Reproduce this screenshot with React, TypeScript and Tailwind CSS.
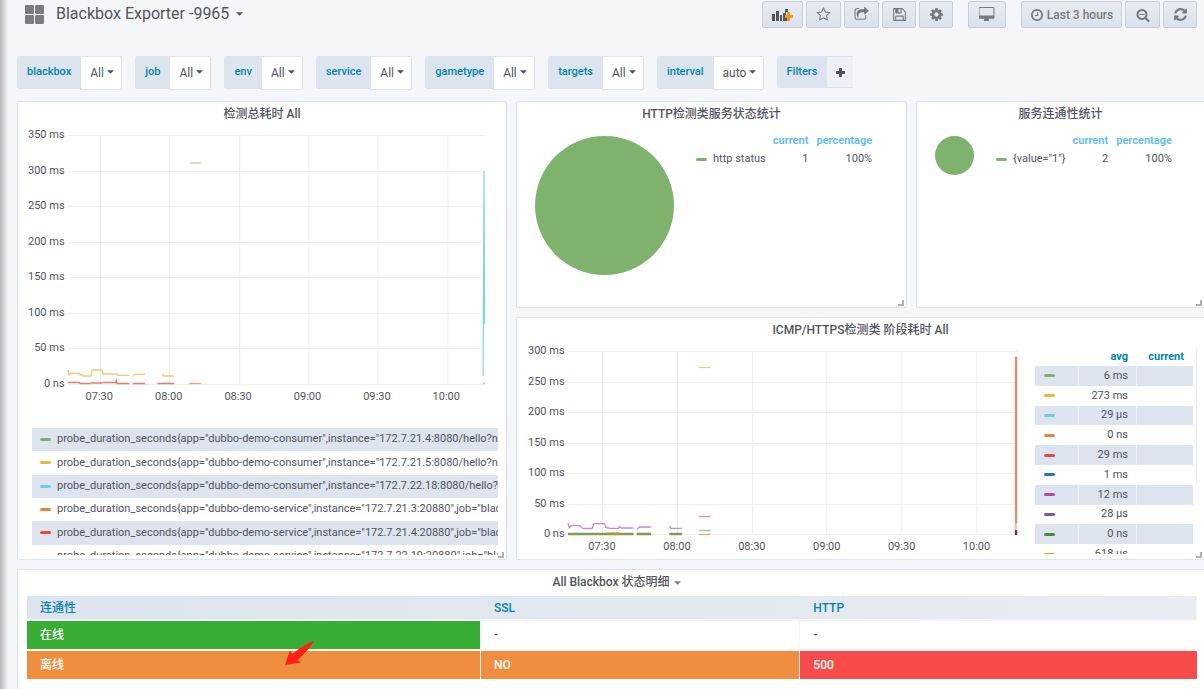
import type { ReactNode } from "react";

const GREEN = "#7eb26d";
const YELLOW = "#eab839";
const CYAN = "#6ed0e0";
const ORANGE = "#ef843c";
const RED = "#e24d42";
const BLUE = "#1f78c1";
const MAGENTA = "#ba43a9";

const icons = {
  star: "M1201 1004l306-297-422-62-189-382-189 382-422 62 306 297-73 421 378-199 377 199zm527-357q0 22-26 48l-363 354 86 500q1 7 1 20 0 50-41 50-19 0-40-12l-449-236-449 236q-22 12-40 12-21 0-31.5-14.5t-10.5-35.5q0-6 2-20l86-500-364-354q-25-27-25-48 0-37 56-46l502-73 225-455q19-41 49-41t49 41l225 455 502 73q56 9 56 46z",
  share:
    "M1472 989v259q0 119-84.5 203.5t-203.5 84.5h-832q-119 0-203.5-84.5t-84.5-203.5v-832q0-119 84.5-203.5t203.5-84.5h255q13 0 22.5 9.5t9.5 22.5q0 27-26 32-77 26-133 60-10 4-16 4h-112q-66 0-113 47t-47 113v832q0 66 47 113t113 47h832q66 0 113-47t47-113v-214q0-19 18-28 28-13 54-37 16-16 35-8 21 9 21 29zm237-496l-384 384q-18 19-45 19-12 0-25-5-39-17-39-59v-192h-160q-323 0-438 131-119 137-74 473 3 23-20 34-8 2-12 2-16 0-26-13-10-14-21-31t-39.5-68.5-49.5-99.5-38.5-114-17.5-122q0-49 3.5-91t14-90 28-88 47-81.5 68.5-74 94.5-61.5 124.5-48.5 159.5-30.5 196.5-11h160v-192q0-42 39-59 13-5 25-5 26 0 45 19l384 384q19 19 19 45t-19 45z",
  save: "M512 1536h768v-384h-768v384zm896 0h128v-896q0-14-10-38.5t-20-34.5l-281-281q-10-10-34-20t-39-10v416q0 40-28 68t-68 28h-576q-40 0-68-28t-28-68v-416h-128v1280h128v-416q0-40 28-68t68-28h832q40 0 68 28t28 68v416zm-384-928v-320q0-13-9.5-22.5t-22.5-9.5h-192q-13 0-22.5 9.5t-9.5 22.5v320q0 13 9.5 22.5t22.5 9.5h192q13 0 22.5-9.5t9.5-22.5zm640 32v928q0 40-28 68t-68 28h-1344q-40 0-68-28t-28-68v-1344q0-40 28-68t68-28h928q40 0 88 20t76 48l280 280q28 28 48 76t20 88z",
  cog: "M1152 896q0-106-75-181t-181-75-181 75-75 181 75 181 181 75 181-75 75-181zm512-109v222q0 12-8 23t-20 13l-185 28q-19 54-39 91 35 50 107 138 10 12 10 25t-9 23q-27 37-99 108t-94 71q-12 0-26-9l-138-108q-44 23-91 38-16 136-29 186-7 28-36 28h-222q-14 0-24.5-8.5t-11.5-21.5l-28-184q-49-16-90-37l-141 107q-10 9-25 9-14 0-25-11-126-114-165-168-7-10-7-23 0-12 8-23 15-21 51-66.5t54-70.5q-27-50-41-99l-183-27q-13-2-21-12.5t-8-23.5v-222q0-12 8-23t19-13l186-28q14-46 39-92-40-57-107-138-10-12-10-24 0-10 9-23 26-36 98.5-107.5t94.5-71.5q13 0 26 10l138 107q44-23 91-38 16-136 29-186 7-28 36-28h222q14 0 24.5 8.5t11.5 21.5l28 184q49 16 90 37l142-107q9-9 24-9 13 0 25 10 129 119 165 170 7 8 7 22 0 12-8 23-15 21-51 66.5t-54 70.5q26 50 41 98l183 28q13 2 21 12.5t8 23.5z",
  desktop:
    "M1728 992v-832q0-13-9.5-22.5t-22.5-9.5h-1600q-13 0-22.5 9.5t-9.5 22.5v832q0 13 9.5 22.5t22.5 9.5h1600q13 0 22.5-9.5t9.5-22.5zm128-832v1088q0 66-47 113t-113 47h-544q0 37 16 77.5t32 71 16 43.5q0 26-19 45t-45 19h-512q-26 0-45-19t-19-45q0-14 16-44t32-70 16-78h-544q-66 0-113-47t-47-113v-1088q0-66 47-113t113-47h1600q66 0 113 47t47 113z",
  clock:
    "M1024 544v448q0 14-9 23t-23 9h-320q-14 0-23-9t-9-23v-64q0-14 9-23t23-9h224v-352q0-14 9-23t23-9h64q14 0 23 9t9 23zm416 352q0-148-73-273t-198-198-273-73-273 73-198 198-73 273 73 273 198 198 273 73 273-73 198-198 73-273zm224 0q0 209-103 385.5t-279.5 279.5-385.5 103-385.5-103-279.5-279.5-103-385.5 103-385.5 279.5-279.5 385.5-103 385.5 103 279.5 279.5 103 385.5z",
  zoomOut:
    "M1088 800v64q0 13-9.5 22.5t-22.5 9.5h-576q-13 0-22.5-9.5t-9.5-22.5v-64q0-13 9.5-22.5t22.5-9.5h576q13 0 22.5 9.5t9.5 22.5zm128 32q0-185-131.5-316.5t-316.5-131.5-316.5 131.5-131.5 316.5 131.5 316.5 316.5 131.5 316.5-131.5 131.5-316.5zm512 832q0 53-37.5 90.5t-90.5 37.5q-54 0-90-38l-343-342q-179 124-399 124-143 0-273.5-55.5t-225-150-150-225-55.5-273.5 55.5-273.5 150-225 225-150 273.5-55.5 273.5 55.5 225 150 150 225 55.5 273.5q0 220-124 399l343 343q37 37 37 90z",
  refresh:
    "M1639 1056q0 5-1 7-64 268-268 434.5t-478 166.5q-146 0-282.5-55t-243.5-157l-129 129q-19 19-45 19t-45-19-19-45v-448q0-26 19-45t45-19h448q26 0 45 19t19 45-19 45l-137 137q71 66 161 102t187 36q134 0 250-65t186-179q11-17 53-117 8-23 30-23h192q13 0 22.5 9.5t9.5 22.5zm25-800v448q0 26-19 45t-45 19h-448q-26 0-45-19t-19-45 19-45l138-138q-148-137-349-137-134 0-250 65t-186 179q-11 17-53 117-8 23-30 23h-199q-13 0-22.5-9.5t-9.5-22.5v-7q65-268 270-434.5t480-166.5q146 0 284 55.5t245 156.5l130-129q19-19 45-19t45 19 19 45z",
};

const Icon = ({ name, className = "size-[15px]" }: { name: keyof typeof icons; className?: string }) => (
  <svg
    viewBox={name === "desktop" ? "0 0 1920 1792" : "0 0 1792 1792"}
    className={`shrink-0 fill-current ${className}`}
    aria-hidden="true"
  >
    <path d={icons[name]} />
  </svg>
);

const Caret = ({ className = "" }: { className?: string }) => (
  <svg viewBox="0 0 8 4" className={`h-1 w-[7px] fill-current ${className}`} aria-hidden="true">
    <path d="M0 0h8L4 4z" />
  </svg>
);

const AddPanelIcon = () => (
  <svg viewBox="0 0 22 14" className="h-[14px] w-[22px]" aria-hidden="true">
    <path fill="#52545c" d="M0 6h3v7H0zM4 3h3v10H4zM8 7h2v6H8zM11 5h2v8h-2zM13 1h3v3h-2v6h2v3h-3z" />
    <path fill="#f7941e" d="M15 4h3v3h3v3h-3v3h-3v-3h-2V7h2z" />
  </svg>
);

interface ToolButtonProps {
  label: string;
  className?: string;
  children: ReactNode;
}

const ToolButton = ({ label, className = "w-[35px]", children }: ToolButtonProps) => (
  <button
    type="button"
    aria-label={label}
    className={`flex h-[27px] cursor-pointer items-center justify-center gap-[3px] rounded-xs border border-[#c7d0d9] bg-linear-to-b from-[#e8ecf2] to-[#dbe2eb] text-xs font-medium text-[#767980] ${className}`}
  >
    {children}
  </button>
);

const variables = [
  { name: "blackbox", value: "All" },
  { name: "job", value: "All" },
  { name: "env", value: "All" },
  { name: "service", value: "All" },
  { name: "gametype", value: "All" },
  { name: "targets", value: "All" },
  { name: "interval", value: "auto" },
];

const Variable = ({ name, value }: { name: string; value: string }) => (
  <div className="flex">
    <label
      htmlFor={name}
      className="flex h-[33px] items-center rounded-l-xs bg-[#dde4ed] pr-[9px] pl-[10px] text-[11px] font-medium text-[#0083b3]"
    >
      {name}
    </label>
    <div className="relative">
      <select
        id={name}
        className={`h-[34px] appearance-none rounded-r-xs border border-[#dde4ed] bg-white pl-[9px] text-xs text-[#52545c] ${
          value === "auto" ? "w-[51px]" : "w-[42px]"
        }`}
      >
        <option>{value}</option>
      </select>
      <Caret className="pointer-events-none absolute top-[14px] right-2 text-[#52545c]" />
    </div>
  </div>
);

interface PanelProps {
  title: string;
  className?: string;
  caret?: boolean;
  children: ReactNode;
}

const Panel = ({ title, className = "", caret, children }: PanelProps) => (
  <section className={`relative min-w-0 border border-[#dde4ed] bg-white ${className}`}>
    <h2 className="flex h-[25px] items-center justify-center pb-[2px] text-xs font-medium text-[#52545c]">
      <span className="relative">
        {title}
        {caret && <Caret className="absolute top-[7px] left-full ml-1 text-[#767980]" />}
      </span>
    </h2>
    {children}
  </section>
);

const ResizeHandle = () => (
  <svg viewBox="0 0 6 6" className="absolute right-[2px] bottom-[1px] size-[6px] fill-[#b0b2b6]" aria-hidden="true">
    <path d="M4 0h2v6H0V4h4z" />
  </svg>
);

const Dash = ({ color }: { color: string }) => (
  <span className="inline-block h-[3px] w-[11px] shrink-0 rounded-xs" style={{ backgroundColor: color }} />
);

interface Series {
  color: string;
  d: string;
  width?: number;
  opacity?: number;
}

interface GraphProps {
  width: number;
  height: number;
  firstTick: number;
  tickStep: number;
  yLabels: string[];
  series: Series[];
  heightClass: string;
}

const times = ["07:30", "08:00", "08:30", "09:00", "09:30", "10:00"];

const Graph = ({ width, height, firstTick, tickStep, yLabels, series, heightClass }: GraphProps) => (
  <div className="grid min-w-0 flex-1 grid-cols-[auto_1fr] gap-x-[3px] text-[11px] leading-4 text-[#52545c]">
    <div className={`flex flex-col justify-between text-right ${heightClass}`}>
      {yLabels.map((label) => (
        <span key={label}>{label}</span>
      ))}
    </div>
    <div className={`min-w-0 py-2 ${heightClass}`}>
      <svg
        viewBox={`0 0 ${width} ${height}`}
        preserveAspectRatio="none"
        className="size-full overflow-visible"
        fill="none"
        aria-hidden="true"
      >
        {yLabels.map((label, i) => {
          const y = Math.round((i * height) / (yLabels.length - 1)) + 0.5;
          return <path key={label} d={`M0 ${y}H${width}`} stroke="#eeeeee" />;
        })}
        {times.map((time, i) => (
          <path key={time} d={`M${Math.round(firstTick + i * tickStep) + 0.5} 0V${height}`} stroke="#eeeeee" />
        ))}
        {series.map((s, i) => (
          <path
            key={i}
            d={s.d}
            stroke={s.color}
            strokeWidth={s.width ?? 1.3}
            strokeOpacity={s.opacity ?? 0.75}
            strokeLinejoin="round"
          />
        ))}
      </svg>
    </div>
    <div className="col-start-2 -mt-[3px] mr-[3px] -ml-[3px] grid grid-cols-6 text-center">
      {times.map((time) => (
        <span key={time}>{time}</span>
      ))}
    </div>
  </div>
);

const durationSeries: Series[] = [
  { color: GREEN, d: "M122 28H133", opacity: 0.6 },
  {
    color: YELLOW,
    d: "M0 235L1 240L2.7 238.3H11.3L12.3 240.3L13.5 239L14.7 241H23L24 235H34L35 239H48.7L49.5 240.3H61M64.7 241.5L66.3 239.3H77M94.3 238.5L95.3 241H106",
  },
  {
    color: RED,
    d: "M0 247.5H11.3L12.3 248.5H22L23 248H34L35 247.5H47.7L48.3 245L49 248.5H61.3M64.7 248.5H77M89.3 248.5H106",
  },
  { color: ORANGE, d: "M121 248.5H133" },
  { color: CYAN, d: "M414.7 241L415.6 36L416.2 189", width: 1.2, opacity: 0.9 },
  { color: BLUE, d: "M415 248.5H416.5", opacity: 0.6 },
];

const phaseSeries: Series[] = [
  {
    color: MAGENTA,
    d: "M0 172.5L1.3 177L3 174.7H11.7L13.3 176.5L15 177.5H24L26 172.7H36.7L37.7 176.3L42 177.3H50.3L51.7 175.3L53 177H65.3M68.7 178.5L71.3 176H82.7M101.3 175L102.7 177.3H113.7",
    opacity: 0.65,
  },
  { color: "#3f7f8c", d: "M0 182.5H65.5M68.7 182.5H83M101.3 182.5H114", opacity: 0.8 },
  { color: "#99991a", d: "M0 183.5H65.5M68.7 183.5H83M101.3 183.5H114", opacity: 1 },
  { color: "#cca300", d: "M38 182H51" },
  { color: YELLOW, d: "M130.7 16.5H142.5" },
  { color: RED, d: "M130.7 165.5H142.5", opacity: 0.65 },
  { color: GREEN, d: "M130.7 179.5H142.5" },
  { color: ORANGE, d: "M130.7 183.5H142.5" },
  { color: "#d2764a", d: "M447.7 5.5V172.5", width: 2.4, opacity: 0.8 },
  { color: "#d2764a", d: "M447.3 172.5V183.5", width: 2, opacity: 0.5 },
  { color: "#6d1f62", d: "M447.7 179V184", width: 2.4, opacity: 0.9 },
];

const durationLegend = [
  { color: GREEN, text: 'probe_duration_seconds{app="dubbo-demo-consumer",instance="172.7.21.4:8080/hello?name' },
  { color: YELLOW, text: 'probe_duration_seconds{app="dubbo-demo-consumer",instance="172.7.21.5:8080/hello?name' },
  { color: CYAN, text: 'probe_duration_seconds{app="dubbo-demo-consumer",instance="172.7.22.18:8080/hello?name' },
  { color: ORANGE, text: 'probe_duration_seconds{app="dubbo-demo-service",instance="172.7.21.3:20880",job="black' },
  { color: RED, text: 'probe_duration_seconds{app="dubbo-demo-service",instance="172.7.21.4:20880",job="black' },
  { color: "transparent", text: 'probe_duration_seconds{app="dubbo-demo-service",instance="172.7.22.19:20880",job="blac' },
];

const phaseLegend = [
  { color: GREEN, avg: "6 ms" },
  { color: YELLOW, avg: "273 ms" },
  { color: CYAN, avg: "29 µs" },
  { color: ORANGE, avg: "0 ns" },
  { color: RED, avg: "29 ms" },
  { color: BLUE, avg: "1 ms" },
  { color: MAGENTA, avg: "12 ms" },
  { color: "#705da0", avg: "28 µs" },
  { color: "#508642", avg: "0 ns" },
  { color: "#cca300", avg: "618 µs" },
];

interface PieProps {
  sizeClass: string;
  label: string;
  current: number;
}

const Pie = ({ sizeClass, label, current }: PieProps) => (
  <div className="flex items-start gap-[22px] pt-[9px] pl-[18px]">
    <svg viewBox="0 0 100 100" className={`shrink-0 ${sizeClass}`} aria-hidden="true">
      <circle cx="50" cy="50" r="50" fill="#7eb26d" />
    </svg>
    <table className="-mt-1 text-[11px] leading-[18px] whitespace-nowrap text-[#52545c]">
      <thead>
        <tr className="text-right font-bold text-[#64bfee]">
          <td />
          <th className="pl-[7px]">current</th>
          <th className="pl-2">percentage</th>
        </tr>
      </thead>
      <tbody>
        <tr className="text-right">
          <td>
            <span className="flex items-center gap-[6px]">
              <Dash color={GREEN} />
              {label}
            </span>
          </td>
          <td>{current}</td>
          <td>100%</td>
        </tr>
      </tbody>
    </table>
  </div>
);

export default function App() {
  return (
    <div className="relative flex min-h-screen flex-col overflow-hidden bg-[#f5f6f9] pl-[17px] font-[Roboto,'Noto_Sans_CJK_SC',sans-serif]">
      <div className="absolute inset-y-0 left-0 w-2 bg-linear-to-r from-[#b4b5ba] to-[#f5f6f9]" />

      {/* Navbar */}
      <header className="flex items-start justify-between pt-px pr-[7px]">
        <h1>
          <button type="button" className="flex h-[26px] cursor-pointer items-center pl-2 text-base text-[#52545c]">
            <svg viewBox="0 0 19 19" className="size-[19px] fill-[#7b7c82]" aria-hidden="true">
              <rect width="9" height="9" rx="1" />
              <rect x="10" width="9" height="9" rx="1" />
              <rect y="10" width="9" height="9" rx="1" />
              <rect x="10" y="10" width="9" height="9" rx="1" />
            </svg>
            <span className="pr-[7px] pl-3">Blackbox Exporter -9965</span>
            <Caret />
          </button>
        </h1>
        <div className="flex gap-[15px]">
          <div className="flex gap-[3px]">
            <ToolButton label="Add panel" className="w-[41px]">
              <AddPanelIcon />
            </ToolButton>
            <ToolButton label="Star">
              <Icon name="star" />
            </ToolButton>
            <ToolButton label="Share">
              <Icon name="share" />
            </ToolButton>
            <ToolButton label="Save" className="w-[34px]">
              <Icon name="save" />
            </ToolButton>
            <ToolButton label="Settings" className="w-[34px]">
              <Icon name="cog" />
            </ToolButton>
          </div>
          <ToolButton label="Cycle view mode" className="w-[38px]">
            <Icon name="desktop" className="h-[15px] w-4" />
          </ToolButton>
          <div className="flex gap-[3px]">
            <ToolButton label="Last 3 hours" className="w-[101px]">
              <Icon name="clock" className="size-[14px]" />
              Last 3 hours
            </ToolButton>
            <ToolButton label="Zoom out">
              <Icon name="zoomOut" className="size-[14px]" />
            </ToolButton>
            <ToolButton label="Refresh" className="w-[34px]">
              <Icon name="refresh" />
            </ToolButton>
          </div>
        </div>
      </header>

      {/* Template variables */}
      <div className="mt-7 mb-[11px] flex flex-wrap items-start gap-[13px]">
        {variables.map((v) => (
          <Variable key={v.name} {...v} />
        ))}
        <div className="flex h-8">
          <span className="flex items-center rounded-l-xs bg-[#dde4ed] px-[10px] text-[11px] font-medium text-[#0083b3]">
            Filters
          </span>
          <button
            type="button"
            aria-label="Add filter"
            className="flex w-[26px] cursor-pointer items-center justify-center border-y border-[#dde4ed] bg-[#edf0f4]"
          >
            <svg viewBox="0 0 9 9" className="size-[9px] fill-[#52545c]" aria-hidden="true">
              <path d="M3 0h3v3h3v3H6v3H3V6H0V3h3z" />
            </svg>
          </button>
        </div>
      </div>

      <div className="grid grid-cols-[490fr_391fr_288fr] gap-[9px]">
        <Panel title="检测总耗时 All" className="row-span-2 rounded-xs">
          <div className="flex pr-[22px] pl-[10px]">
            <Graph
              width={416}
              height={249}
              firstTick={32}
              tickStep={69.3}
              heightClass="h-[265px]"
              yLabels={["350 ms", "300 ms", "250 ms", "200 ms", "150 ms", "100 ms", "50 ms", "0 ns"]}
              series={durationSeries}
            />
          </div>
          <div className="mt-[23px] mr-2 mb-1 ml-[14px] h-[127px] overflow-hidden">
            <ul className="grid h-[140px] auto-rows-fr text-[11px] text-[#52545c]">
              {durationLegend.map((item) => (
                <li
                  key={item.text}
                  className="flex items-center gap-[6px] overflow-hidden pl-2 whitespace-nowrap odd:bg-[#dde4ed]"
                >
                  <Dash color={item.color} />
                  {item.text}
                </li>
              ))}
            </ul>
          </div>
          <ResizeHandle />
        </Panel>

        <Panel title="HTTP检测类服务状态统计" className="min-h-[207px] rounded-xs">
          <Pie sizeClass="size-[139px]" label="http status" current={1} />
          <ResizeHandle />
        </Panel>

        <Panel title="服务连通性统计" className="rounded-l-xs border-r-0">
          <Pie sizeClass="size-[39px]" label={'{value="1"}'} current={2} />
          <ResizeHandle />
        </Panel>

        <Panel title="ICMP/HTTPS检测类 阶段耗时 All" className="col-span-2 rounded-l-xs border-r-0">
          <div className="flex pr-[7px] pb-1 pl-[11px]">
            <Graph
              width={449}
              height={183}
              firstTick={34}
              tickStep={74.8}
              heightClass="h-[199px]"
              yLabels={["300 ms", "250 ms", "200 ms", "150 ms", "100 ms", "50 ms", "0 ns"]}
              series={phaseSeries}
            />
            <div className="mt-[5px] ml-[18px] h-[206px] w-[162px] shrink-0 overflow-hidden">
              <div className="flex items-start justify-between">
                <table className="h-[216px] w-[158px] table-fixed border-separate border-spacing-0 text-right text-[11px] leading-4 text-[#52545c]">
                  <thead>
                    <tr className="h-[18px] font-bold text-[#0083b3]">
                      <td className="w-11" />
                      <th className="w-[58px] pr-[9px]">avg</th>
                      <th className="pr-[9px]">current</th>
                    </tr>
                  </thead>
                  <tbody>
                    {phaseLegend.map((row) => (
                      <tr key={row.color} className="odd:bg-[#dde4ed]">
                        <td className="border-r border-white/50 pl-[9px] text-left">
                          <span className="flex">
                            <Dash color={row.color} />
                          </span>
                        </td>
                        <td className="border-r border-white/50 pr-2">{row.avg}</td>
                        <td />
                      </tr>
                    ))}
                  </tbody>
                </table>
                <div className="h-[137px] w-px bg-[#e9edf2]" />
              </div>
            </div>
          </div>
          <ResizeHandle />
        </Panel>
      </div>

      <Panel title="All Blackbox 状态明细" caret className="mt-[9px] flex-1 rounded-tl-xs border-r-0 border-b-0">
        <div className="pt-px pr-[7px] pb-2 pl-[9px]">
          <table className="w-full table-fixed border-separate border-spacing-0 text-left text-xs font-medium">
            <thead>
              <tr className="h-[23px] bg-linear-to-r from-[#dde4ed] to-[#e9ecf1] text-[#0083b3]">
                <th className="w-[38.8%] pl-[13px] font-medium">连通性</th>
                <th className="w-[27.3%] pl-[13px] font-medium">SSL</th>
                <th className="pl-[13px] font-medium">HTTP</th>
              </tr>
            </thead>
            <tbody>
              <tr className="h-[30px] text-[#52545c]">
                <td className="border-t-2 border-r border-[#f4f5f8] bg-[#37ae33] bg-clip-padding pl-[13px] text-white">在线</td>
                <td className="border-t-2 border-r border-[#f4f5f8] pl-[13px]">-</td>
                <td className="border-t-2 border-[#f4f5f8] pl-[13px]">-</td>
              </tr>
              <tr className="h-[30px] text-white">
                <td className="relative border-t-2 border-r border-[#f4f5f8] bg-[#ef8e3f] bg-clip-padding pl-[13px]">
                  离线
                  <svg
                    viewBox="0 0 30 26"
                    className="absolute -top-[11px] left-[57%] h-[26px] w-[30px] fill-[#ff1f14]"
                    aria-hidden="true"
                  >
                    <path d="M0 25L5 10.500L7.500 14Q18 5 29.500 .500Q22 12 12.500 20L16 22.500z" />
                  </svg>
                </td>
                <td className="border-t-2 border-r border-[#f4f5f8] bg-[#ef8e3f] bg-clip-padding pl-[13px]">NO</td>
                <td className="border-t-2 border-[#f4f5f8] bg-[#f84b4b] bg-clip-padding pl-[13px]">500</td>
              </tr>
            </tbody>
          </table>
        </div>
      </Panel>
    </div>
  );
}
